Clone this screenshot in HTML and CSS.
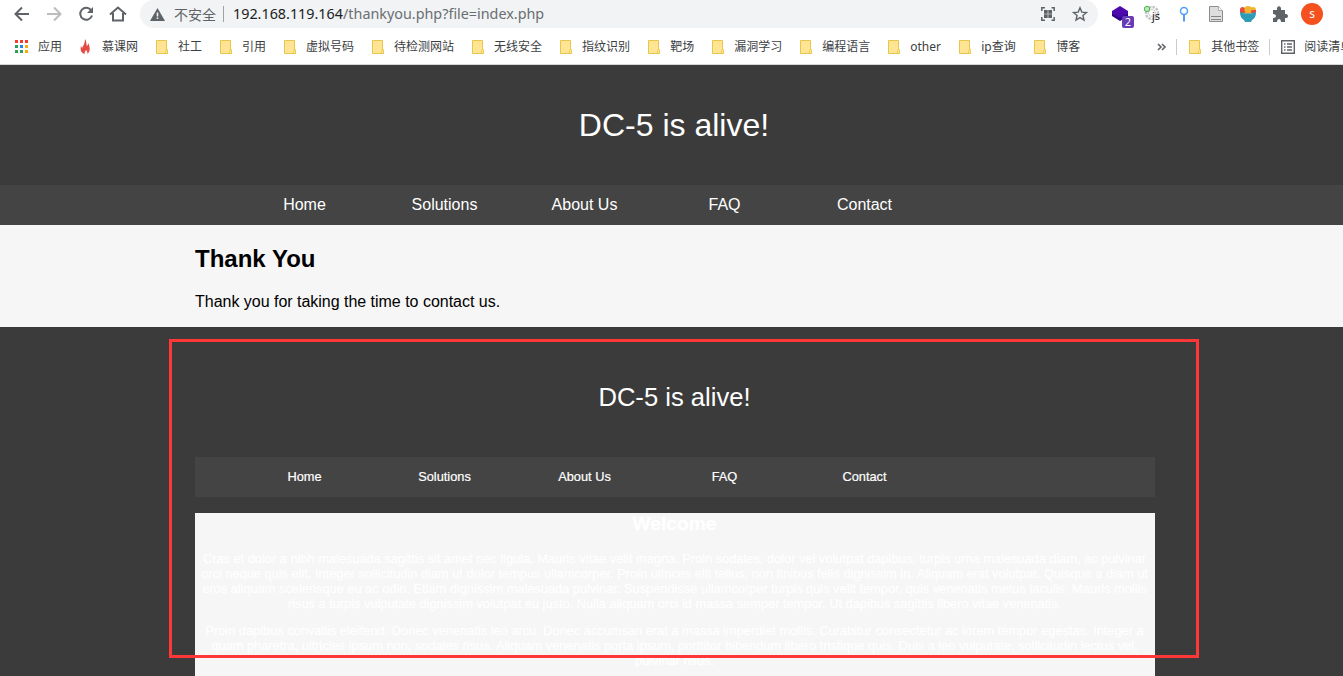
FILE: index.html
```html
<!DOCTYPE html>
<html lang="zh-CN">
<head>
<meta charset="utf-8">
<title>DC-5 is alive!</title>
<link rel="stylesheet" href="styles.css">
</head>
<body>
<div class="toolbar">
  <svg class="nav-icons" width="140" height="28" viewBox="0 0 140 28" fill="none" stroke="#5f6368" stroke-width="2">
    <path d="M29 14H16M22 7.500 15.500 14l6.500 6.500"/>
    <path stroke="#babcbe" d="M47 14h13M54 7.500 60.500 14 54 20.500"/>
    <path d="M91.300 10.500A6 6 0 1 0 92 15.500"/><path fill="#5f6368" stroke="none" d="M93 7v6h-6z"/>
    <path d="M110 14.500 118 7.500l8 7M113 13v7.500h10V13"/>
  </svg>
  <div class="omnibox">
    <svg class="warn" width="15" height="13" viewBox="0 0 15 13"><path fill="#5f6368" d="M7.500 0 15 13H0z"/><path stroke="#f1f3f4" stroke-width="1.600" d="M7.500 4.500v4M7.500 9.500v1.600"/></svg>
    <span class="unsafe">不安全</span>
    <span class="divider"></span>
    <span class="url"><b>192.168.119.164</b>/thankyou.php?file=index.php</span>
    <svg class="omni-icons" width="58" height="28" viewBox="0 0 58 28" fill="none" stroke="#5f6368">
      <path stroke-width="1.500" d="M5 7.800H1.800V11M11.500 7.800h2.700V11M5 20.200H1.800V17M11.500 20.200h2.700V17"/>
      <path fill="#5f6368" stroke="none" d="M4 10h3.700v3.700H4zM8.300 10H12v3.700H8.300zM4 14.300h3.700V18H4zM8.300 14.300H12V18H8.300z"/>
      <path stroke-width="1.400" d="m40 7.800 1.800 4.300 4.700.4-3.600 3 1.100 4.600-4-2.500-4 2.500 1.100-4.600-3.600-3 4.700-.4z"/>
    </svg>
  </div>
  <svg class="extensions" width="245" height="28" viewBox="0 0 245 28">
    <path fill="#4b08ad" d="m22 6 8 5v3l-8 5-8-5v-3z"/><path fill="#2d0087" d="m14 13.500 8 4.500 8-4.500v2.500l-8 5-8-5z"/>
    <rect x="24" y="16" width="12" height="12" rx="2" fill="#673ab7"/><text class="badge" x="30" y="26">2</text>
    <circle cx="54" cy="13" r="6" fill="none" stroke="#c5c5c5" stroke-width="2.500" stroke-dasharray="2.500 1"/><circle cx="54" cy="13" r="3.500" fill="none" stroke="#ccc"/>
    <circle cx="49" cy="9" r="2.700" fill="#b9e7b9" stroke="#4bb74e"/><text class="js" x="54" y="20">js</text>
    <circle cx="86" cy="11" r="3.500" fill="none" stroke="#4da0fa" stroke-width="1.500"/><path stroke="#4da0fa" stroke-width="2" d="M86 14.500v7"/>
    <path fill="#ddd" stroke="#8c8c8c" d="M111.500 6.500h9l4 4v11h-13z"/><path fill="#fff" stroke="#aaa" d="M120.500 6.500v4h4"/><path stroke="#858585" d="M113 16.500h10M113 19.500h10"/>
    <circle cx="150" cy="10" r="4" fill="#f1b631"/><circle cx="144.500" cy="9.500" r="2.500" fill="#e74c3c"/><circle cx="155" cy="10" r="3" fill="#f1b631"/><path fill="#e74c3c" d="M142 10h16v3h-16z"/><circle cx="150" cy="10" r="3.500" fill="#f1b631"/>
    <path fill="#2d9cb8" d="M142 12q8 3 16 0 0 6-4 8l-1 2h-6l-1-2q-4-2-4-8z"/>
    <path fill="#5f6368" d="M175 10h4c-1-5 5-5 4 0h4v4c4-1 4 5 0 4v4h-4c0-4-4-4-4 0h-4v-4c4 0 4-4 0-4z"/>
    <circle cx="214" cy="14" r="11" fill="#f4511e"/><text class="avatar" x="214" y="18">s</text>
  </svg>
</div>
<svg class="defs" width="0" height="0"><symbol id="folder" viewBox="0 0 13 14"><path fill="#ffe593" stroke="#e8c64b" d="M.5.5h10v9h1v4H.5z"/><path fill="#ffe593" stroke="#e8c64b" stroke-width=".8" d="M9.500 13.500v-3l1-1 1 1v3z"/></symbol></svg>
<div class="bookmarks">
  <span class="bm"><svg width="14" height="14"><path fill="#f03d32" d="M0 0h3v3H0zM5 0h3v3H5zM10 0h3v3h-3z"/><path fill="#2aa15a" d="M0 5h3v3H0zM0 10h3v3H0zM5 10h3v3H5z"/><path fill="#2286f0" d="M5 5h3v3H5z"/><path fill="#f4ad08" d="M10 5h3v3h-3zM10 10h3v3h-3z"/></svg>应用</span>
  <span class="bm"><svg width="14" height="16" viewBox="0 0 14 16"><path fill="#e54b43" d="M6 0c2 3 1 5 2 7 1-1 1-2 1-3 2 3 3 9-1 11 1-2 0-3-1-4-1 2-2 2-1 4-4-1-5-4-4-8l1 2C5 6 6 3 6 0z"/></svg>慕课网</span>
  <span class="bm"><svg width="13" height="14"><use href="#folder"/></svg>社工</span>
  <span class="bm"><svg width="13" height="14"><use href="#folder"/></svg>引用</span>
  <span class="bm"><svg width="13" height="14"><use href="#folder"/></svg>虚拟号码</span>
  <span class="bm"><svg width="13" height="14"><use href="#folder"/></svg>待检测网站</span>
  <span class="bm"><svg width="13" height="14"><use href="#folder"/></svg>无线安全</span>
  <span class="bm"><svg width="13" height="14"><use href="#folder"/></svg>指纹识别</span>
  <span class="bm"><svg width="13" height="14"><use href="#folder"/></svg>靶场</span>
  <span class="bm"><svg width="13" height="14"><use href="#folder"/></svg>漏洞学习</span>
  <span class="bm"><svg width="13" height="14"><use href="#folder"/></svg>编程语言</span>
  <span class="bm other"><svg width="13" height="14"><use href="#folder"/></svg>other</span>
  <span class="bm ip"><svg width="13" height="14"><use href="#folder"/></svg>ip查询</span>
  <span class="bm"><svg width="13" height="14"><use href="#folder"/></svg>博客</span>
  <svg class="more" width="10" height="8" fill="none" stroke="#5f6368" stroke-width="1.600"><path d="m1 1 3 3-3 3M5 1l3 3-3 3"/></svg>
  <span class="sep"></span>
  <span class="bm rest"><svg width="13" height="14"><use href="#folder"/></svg>其他书签</span>
  <span class="sep reading-sep"></span>
  <span class="bm reading"><svg width="14" height="14" fill="none" stroke="#5f6368"><path stroke-width="1.400" d="M.7.700h12.600v12.600H.700z"/><path stroke-width="1.500" d="M3 4h1.500M6 4h5M3 7h1.500M6 7h5M3 10h1.500M6 10h5"/></svg>阅读清单</span>
</div>
<header class="hero"><h1 class="hero-title">DC-5 is alive!</h1></header>
<nav class="menu"><ul class="links"><li>Home</li><li>Solutions</li><li>About Us</li><li>FAQ</li><li>Contact</li></ul></nav>
<main class="content"><h2 class="heading">Thank You</h2><p class="message">Thank you for taking the time to contact us.</p></main>
<footer class="footer">
  <div class="inner">
    <div class="inner-title">DC-5 is alive!</div>
    <ul class="links small"><li>Home</li><li>Solutions</li><li>About Us</li><li>FAQ</li><li>Contact</li></ul>
    <div class="welcome">
      <h2 class="welcome-title">Welcome</h2>
      <p>Cras et dolor a nibh malesuada sagittis sit amet nec ligula. Mauris vitae velit magna. Proin sodales, dolor vel volutpat dapibus, turpis urna malesuada diam, ac pulvinar<br>orci neque quis elit. Integer sollicitudin diam ut dolor tempus ullamcorper. Proin ultrices elit tellus, non finibus felis dignissim in. Aliquam erat volutpat. Quisque a diam ut<br>eros aliquam scelerisque eu ac odio. Etiam dignissim malesuada pulvinar. Suspendisse ullamcorper turpis quis velit tempor, quis venenatis metus iaculis. Mauris mollis<br>risus a turpis vulputate dignissim volutpat eu justo. Nulla aliquam orci id massa semper tempor. Ut dapibus sagittis libero vitae venenatis.</p>
      <p>Proin dapibus convallis eleifend. Donec venenatis leo arcu. Donec accumsan erat a massa imperdiet mollis. Curabitur consectetur ac lorem tempor egestas. Integer a<br>quam pharetra, ultricies ipsum non, sodales risus. Aliquam venenatis porta ipsum, porttitor bibendum libero tristique quis. Duis a leo vulputate, sollicitudin lectus vel,<br>pulvinar risus.</p>
    </div>
  </div>
</footer>
<div class="marker"></div>
</body>
</html>
```
FILE: styles.css
```css
* { box-sizing: border-box; }
body { margin: 0; width: 1343px; height: 676px; overflow: hidden; background: #3b3b3b; font: 16px/18px "Liberation Sans", Arial, sans-serif; color: #000; }
.toolbar { display: flex; height: 28px; background: #fff; }
.omnibox { display: flex; align-items: center; width: 958px; height: 28px; padding-left: 10px; border-radius: 14px; background: #f1f3f4; color: #5f6368; font: 15px/28px "Noto Sans", "Noto Sans CJK SC", sans-serif; white-space: nowrap; }
.warn { margin-right: 9px; }
.unsafe { width: 42px; font: 14px/26px "Noto Sans CJK SC", sans-serif; }
.divider { width: 1px; height: 16px; margin: 0 9px 0 7px; background: #9fa2a5; }
.url { width: 311px; font-size: 14.350px; line-height: 26px; color: #6a6e72; }
.url b { font-weight: 400; color: #202124; }
.omni-icons { margin-left: auto; }
.extensions { margin-left: 0; overflow: visible; }
.badge { fill: #fff; font: 11px "Noto Sans", sans-serif; text-anchor: middle; }
.js { fill: #222; font: 11px "Noto Sans", sans-serif; }
.avatar { fill: #fff; font: 12px "Noto Sans", sans-serif; text-anchor: middle; }
.defs { display: block; position: absolute; }
.bookmarks { display: flex; align-items: center; height: 37px; padding: 1px 0 0 15px; overflow: hidden; border-bottom: 1px solid #d5d6d8; background: #fff; color: #3c4043; font: 12px/18px "Noto Sans", "Noto Sans CJK SC", sans-serif; white-space: nowrap; }
.bm { display: flex; flex: none; align-items: center; margin-right: 18px; }
.bm > svg { flex: none; margin-right: 9px; }
.bm:first-child { margin-right: 17px; }
.bm:nth-child(2) > svg { margin-right: 9px; }
.other { width: 53px; }
.ip { width: 57px; }
.more { flex: none; margin: 0 9px 0 59px; }
.sep { flex: none; width: 1px; height: 16px; margin-right: 12px; background: #c9cbce; }
.rest { margin-right: 10px; }
.reading-sep { margin-right: 11px; }
.hero { height: 120px; padding: 41px 0 0 194px; }
.hero-title { width: 960px; margin: 0; color: #fff; font-size: 32px; line-height: 38px; font-weight: 400; text-align: center; }
.menu { height: 40px; padding-left: 195px; background: #444; }
.links { display: flex; width: 960px; height: 40px; margin: 0; padding: 0 0 0 39.500px; background: #444; color: #fff; line-height: 39px; list-style: none; text-align: center; }
.links li { width: 140px; }
.content { height: 102px; padding: 20px 0 0 195px; background: #f6f6f6; }
.heading { margin: 0; font-size: 24px; line-height: 28px; }
.message { margin: 20px 0 0; letter-spacing: -.02px; }
.footer { padding-left: 195px; color: #fff; font-size: 12.800px; line-height: 15px; text-align: center; }
.inner { width: 960px; }
.inner-title { height: 130px; padding: 55px 1px 0 0; font-size: 25.600px; line-height: 30px; }
.small { font-size: 12.800px; -webkit-text-stroke: .2px #fff; }
.welcome { height: 180px; margin-top: 16px; padding-right: 1px; overflow: hidden; background: #f6f6f6; -webkit-text-stroke: .25px #fff; }
.welcome-title { margin: 0 0 16px; font-size: 19.200px; line-height: 22px; }
.welcome p { margin: 0 0 12px; white-space: nowrap; }
.marker { position: absolute; left: 169px; top: 339px; width: 1030px; height: 319px; border: 3px solid #ff3737; }
```
